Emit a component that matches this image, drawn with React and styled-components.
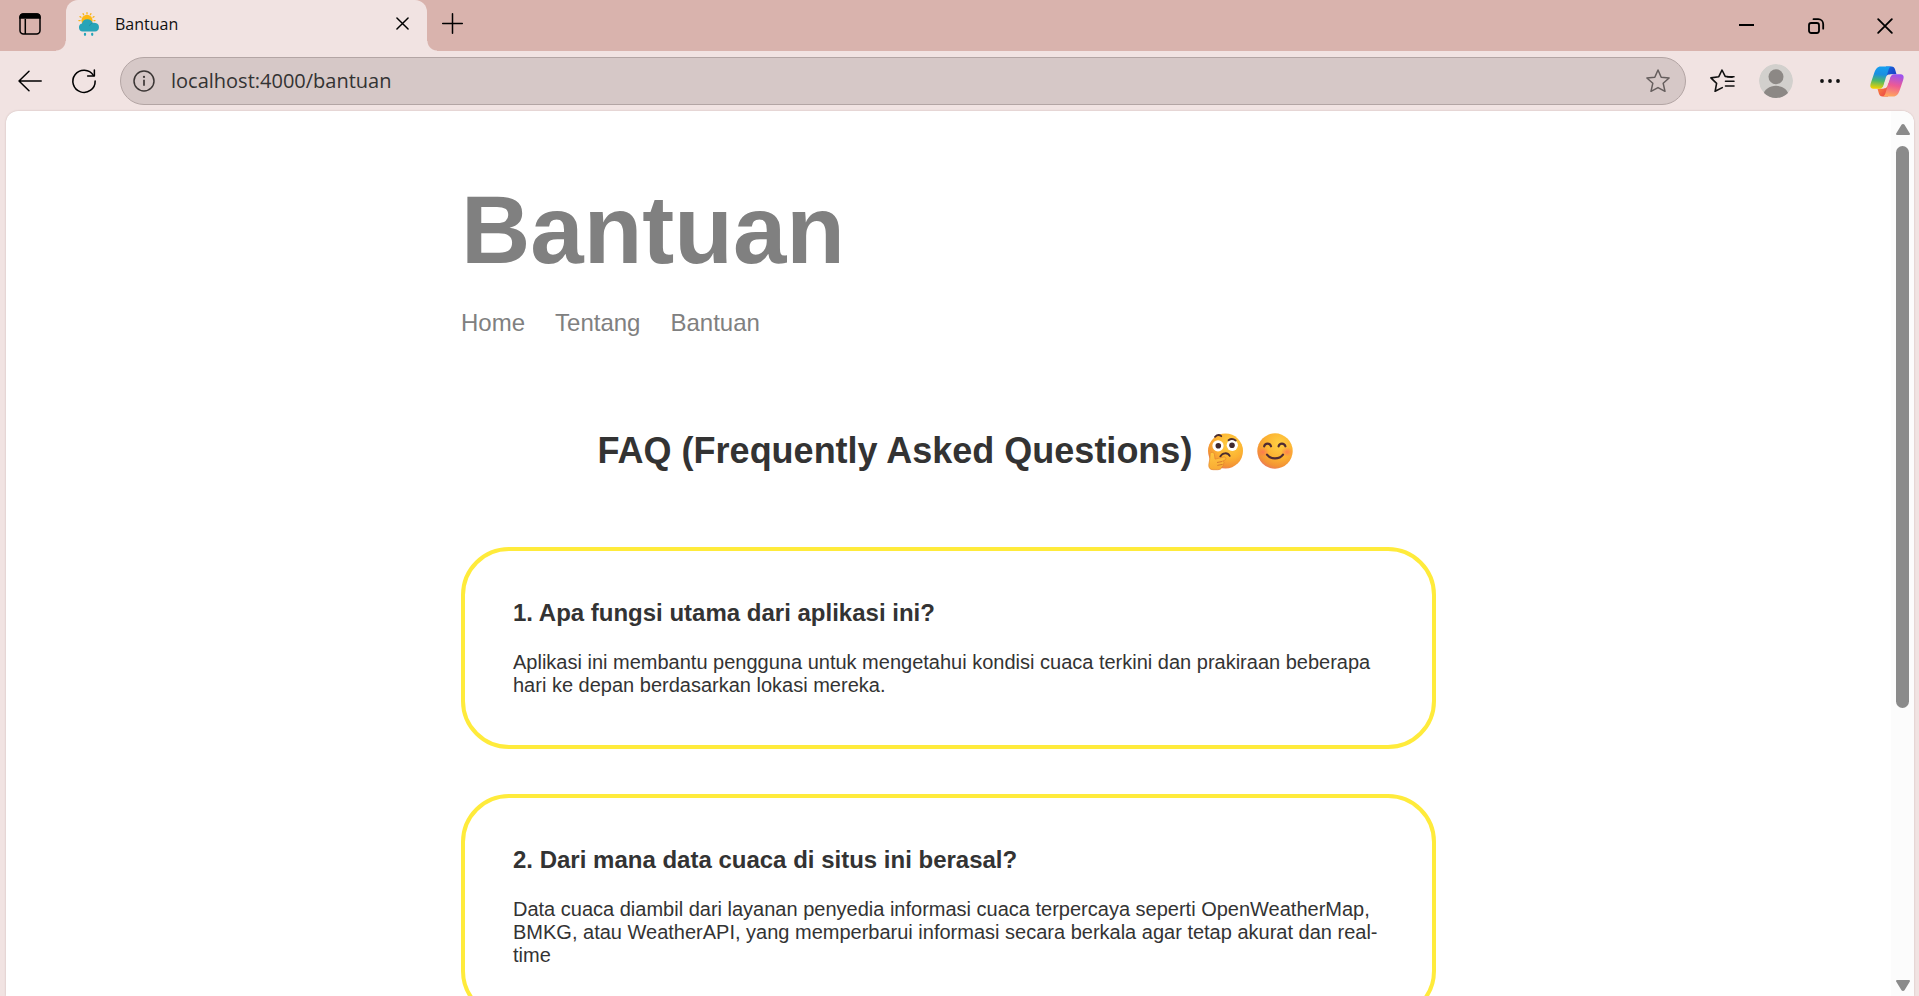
import React from "react";
import styled, { createGlobalStyle } from "styled-components";

const UI_FONT = `"Open Sans", "Noto Sans", sans-serif`;
const PAGE_FONT = `"Liberation Sans", Arial, sans-serif`;

const GlobalStyle = createGlobalStyle`
  * { box-sizing: border-box; }
  body { margin: 0; background: #f1e3e2; overflow: hidden; }
  svg { display: block; overflow: visible; flex: none; }
`;

const Window = styled.div`
  display: flex;
  flex-direction: column;
  height: 100vh;
  background: #f1e3e2;
  font-family: ${UI_FONT};
`;

const TabStrip = styled.header`
  display: flex;
  height: 51px;
  flex: none;
  background: #d9b3ad;
`;

const IconButton = styled.button`
  display: flex;
  align-items: center;
  justify-content: center;
  flex: none;
  width: ${(p) => p.$width}px;
  height: ${(p) => p.$height || 40}px;
  padding: 0;
  border: 0;
  background: none;
  color: #000;
`;

const Tab = styled.div`
  position: relative;
  display: flex;
  align-items: center;
  gap: 15px;
  width: 361px;
  height: 51px;
  margin-left: 6px;
  padding: 0 17px 4px 12px;
  border-radius: 12px 12px 0 0;
  background: #f1e3e2;

  &::before,
  &::after {
    content: "";
    position: absolute;
    bottom: 0;
    width: 10px;
    height: 10px;
  }
  &::before {
    right: 100%;
    background: radial-gradient(circle at 0 0, transparent 9px, #f1e3e2 10px);
  }
  &::after {
    left: 100%;
    background: radial-gradient(circle at 100% 0, transparent 9px, #f1e3e2 10px);
  }
`;

const TabTitle = styled.span`
  flex: 1;
  font-size: 16px;
  line-height: 24px;
  color: #111;
`;

const WindowControls = styled.div`
  display: flex;
  margin-left: auto;
`;

const Toolbar = styled.div`
  display: flex;
  align-items: center;
  height: 60px;
  flex: none;
  padding: 0 2px 0 3px;
`;

const AddressBar = styled.form`
  display: flex;
  align-items: center;
  flex: 1;
  height: 48px;
  margin: 0 9px;
  border: 1px solid #b3a5a4;
  border-radius: 24px;
  background: #d6c8c7;
`;

const AddressInput = styled.input`
  flex: 1;
  min-width: 0;
  padding: 0 0 0 4px;
  border: 0;
  outline: 0;
  background: none;
  font-family: ${UI_FONT};
  font-size: 20px;
  line-height: 28px;
  color: #333;
`;

const Viewport = styled.div`
  display: flex;
  flex: 1;
  min-height: 0;
  margin: 0 5px 0 6px;
  border-radius: 12px 12px 0 0;
  background: #fff;
  overflow: hidden;
  box-shadow: 0 0 2px #c9b4b2;
`;

const Page = styled.div`
  flex: 1;
  min-width: 0;
  overflow-y: auto;
  scrollbar-width: none;
  padding: 64px 20px;
  font-family: ${PAGE_FONT};
  color: #333;
`;

const Content = styled.div`
  max-width: 975px;
  margin: 0 auto;
`;

const Title = styled.h1`
  margin: 0 0 24px;
  font-size: 96px;
  line-height: 110px;
  font-weight: 700;
  color: #808080;
`;

const Nav = styled.nav`
  display: flex;
  gap: 30px;
  margin-bottom: 93px;
`;

const NavLink = styled.a`
  font-size: 24px;
  line-height: 28px;
  color: #808080;
  text-decoration: none;
`;

const FaqHeading = styled.h2`
  display: flex;
  align-items: center;
  justify-content: center;
  margin: 0 0 75px;
  font-size: 36px;
  line-height: 42px;
  font-weight: 700;
`;

const Emojis = styled.span`
  display: flex;
  gap: 14px;
  padding: 0 6px 0 15px;
`;

const FaqList = styled.div`
  display: flex;
  flex-direction: column;
  gap: 45px;
`;

const Card = styled.article`
  padding: 48px;
  border: 4px solid #ffeb3b;
  border-radius: 48px;
`;

const Question = styled.h3`
  margin: 0 0 24px;
  font-size: 24px;
  line-height: 28px;
  font-weight: 700;
`;

const Answer = styled.p`
  margin: 0;
  font-size: 20px;
  line-height: 23px;
`;

const ScrollTrack = styled.div`
  display: flex;
  flex-direction: column;
  align-items: center;
  flex: none;
  width: 23px;
  padding: 13px 0 5px;
  background: #fcfcfc;
`;

const ScrollRail = styled.div`
  flex: 1;
  width: 13px;
  margin: 11px 0 8px;
`;

const ScrollThumb = styled.div`
  height: 68%;
  border-radius: 7px;
  background: #8b8b8b;
`;

const TabActionsIcon = () => (
  <svg width="22" height="22" viewBox="0 0 22 22" fill="none" stroke="#000" strokeWidth="1.5">
    <rect x="1" y="1" width="20" height="20" rx="3.5" />
    <path d="M1 5V4a3 3 0 0 1 3-3h14a3 3 0 0 1 3 3v1z" fill="#000" />
    <path d="M6.3 6v15" />
  </svg>
);

const WeatherIcon = () => (
  <svg width="22" height="24" viewBox="0 0 22 24">
    <g stroke="#f9b418" strokeWidth="1.3" strokeLinecap="round">
      <path d="M9 .6v1.2M5 1.7l.6 1M13 1.7l-.6 1M2 4.6l1 .6M16 4.6l-1 .6M.9 8.6h1.2M17 8.6h-1" />
    </g>
    <circle cx="9" cy="8.4" r="5.6" fill="#fdb813" />
    <path
      d="M4.6 19.6A4.2 4.2 0 0 1 4 11.4a5.6 5.6 0 0 1 10.6-.5 4.4 4.4 0 0 1 2.9.2 4.3 4.3 0 0 1-.5 8.5z"
      fill="#27a4b8"
    />
    <path d="M14.6 10.9a4.6 4.6 0 0 0-3.3 3.2" stroke="#1d8ea2" strokeWidth=".8" fill="none" />
    <path d="M7 21.800v1M14.200 21.800v1" stroke="#27a4b8" strokeWidth="2.2" strokeLinecap="round" />
  </svg>
);

const CrossIcon = ({ size = 13 }) => (
  <svg width={size} height={size} viewBox="0 0 14 14" stroke="#000" strokeWidth="1.6" strokeLinecap="round">
    <path d="M1 1l12 12M13 1L1 13" />
  </svg>
);

const PlusIcon = () => (
  <svg width="21" height="21" viewBox="0 0 21 21" stroke="#000" strokeWidth="1.5" strokeLinecap="round">
    <path d="M10.5.7v19.6M.7 10.5h19.6" />
  </svg>
);

const MinimizeIcon = () => (
  <svg width="15" height="16" viewBox="0 0 15 16" stroke="#000" strokeWidth="2">
    <path d="M0 7h15" />
  </svg>
);

const RestoreIcon = () => (
  <svg width="16" height="16" viewBox="0 0 16 16" fill="none" stroke="#000" strokeWidth="1.8">
    <rect x="1" y="5" width="10" height="10" rx="2.2" />
    <path d="M5.500 1.200h4.700a5 5 0 0 1 5 5v4.500" strokeLinecap="round" />
  </svg>
);

const BackIcon = () => (
  <svg width="24" height="22" viewBox="0 0 24 22" fill="none" stroke="#000" strokeWidth="1.5" strokeLinecap="round">
    <path d="M23.2 11H1M11 1.2L1 11l10 9.8" strokeLinejoin="round" />
  </svg>
);

const ReloadIcon = () => (
  <svg width="24" height="24" viewBox="0 0 25 25" fill="none" stroke="#000" strokeWidth="1.6" strokeLinecap="round">
    <path d="M24.1 12.5A11.6 11.6 0 1 1 22.3 6.6" />
    <path d="M23.3 1v6.2h-7" strokeLinejoin="round" />
  </svg>
);

const InfoIcon = () => (
  <svg width="22" height="22" viewBox="0 0 22 22" fill="none" stroke="#3b3635" strokeWidth="1.5">
    <circle cx="11" cy="11" r="10" />
    <path d="M11 9.8v6" strokeWidth="1.7" />
    <circle cx="11" cy="6.9" r="1.1" fill="#3b3635" stroke="none" />
  </svg>
);

const StarIcon = () => (
  <svg width="24" height="24" viewBox="0 0 24 24" fill="none" stroke="#655e5d" strokeWidth="1.5" strokeLinejoin="round">
    <path d="M12 1l3.2 7.2 7.9.8-5.9 5.3 1.8 8L12 18.6 5 22.300l1.800-8L.9 9l7.900-.8z" />
  </svg>
);

const FavoritesIcon = () => (
  <svg
    width="24"
    height="24"
    viewBox="0 0 24 24"
    fill="none"
    stroke="#111"
    strokeWidth="1.6"
    strokeLinecap="round"
    strokeLinejoin="round"
  >
    <path d="M22 8.3l-6.800-.9L12 1 8.800 7.700.9 8.900l5.700 5.400-1.500 8 7.200-3.700" />
    <path d="M15.500 12.300H24M17.500 7.700H24M15.500 17H24" />
  </svg>
);

const AvatarIcon = () => (
  <svg width="34" height="34" viewBox="0 0 34 34">
    <defs>
      <clipPath id="avatar-clip">
        <circle cx="17" cy="17" r="17" />
      </clipPath>
    </defs>
    <g clipPath="url(#avatar-clip)">
      <circle cx="17" cy="17" r="17" fill="#d2d0cd" />
      <circle cx="17" cy="12.700" r="7.500" fill="#8c8885" />
      <path d="M4 32c1-6.500 6.500-10.200 13-10.200S29 25.500 30 32l-5 4H9z" fill="#8c8885" />
    </g>
  </svg>
);

const DotsIcon = () => (
  <svg width="20" height="4" viewBox="0 0 20 4" fill="#111">
    <circle cx="2" cy="2" r="1.900" />
    <circle cx="10" cy="2" r="1.900" />
    <circle cx="18" cy="2" r="1.900" />
  </svg>
);

const CopilotIcon = () => (
  <svg width="34" height="31" viewBox="0 0 34 31">
    <defs>
      <linearGradient id="cp-left" x1=".5" y1="0" x2=".4" y2="1">
        <stop offset="0" stopColor="#159ff0" />
        <stop offset=".35" stopColor="#1b8fe0" />
        <stop offset=".65" stopColor="#4fb868" />
        <stop offset="1" stopColor="#f3d200" />
      </linearGradient>
      <linearGradient id="cp-right" x1=".6" y1="0" x2=".4" y2="1">
        <stop offset="0" stopColor="#9b53f0" />
        <stop offset=".5" stopColor="#ee5a94" />
        <stop offset="1" stopColor="#ffa85c" />
      </linearGradient>
      <linearGradient id="cp-top" x1="0" y1="0" x2="1" y2="1">
        <stop offset="0" stopColor="#1a6ce0" />
        <stop offset="1" stopColor="#1730bd" />
      </linearGradient>
      <linearGradient id="cp-bottom" x1="0" y1="0" x2="1" y2="1">
        <stop offset="0" stopColor="#ff9c3c" />
        <stop offset="1" stopColor="#e8354a" />
      </linearGradient>
    </defs>
    <path d="M16 .5h5.500c2 0 3 1 3.600 3l1.400 4.700h-4c-3 0-4.300 1.200-5.200 4L14 16z" fill="url(#cp-top)" />
    <path d="M18 30.500h-5.500c-2 0-3-1-3.600-3L7.500 22.800h4c3 0 4.300-1.200 5.200-4L20 15z" fill="url(#cp-bottom)" />
    <path
      d="M21.500.5H10.800C7.400.5 5.600 3 4.300 6.800L1 16.500c-1.500 4.500-.5 6.300 3.500 6.300h5c2.500 0 3.700-1 4.500-3.700l4.200-14.200C18.900 2.300 19.600.9 21.500.5z"
      fill="url(#cp-left)"
    />
    <path
      d="M12.500 30.500h10.700c3.400 0 5.200-2.500 6.500-6.300L33 14.500c1.500-4.500.5-6.300-3.500-6.300h-5c-2.500 0-3.700 1-4.500 3.700l-4.200 14.200c-.7 2.600-1.400 4-3.300 4.400z"
      fill="url(#cp-right)"
    />
    <path
      d="M19 8.600h3.800c-2 .8-2.600 2-3.200 4l-2 6.800c-.6 1.900-1.700 2.900-3.900 2.900h-2.500c1.100-.5 1.900-1.500 2.500-3.600l2-6.600C16.300 9.900 17.300 8.600 19 8.600z"
      fill="#f1e3e2"
    />
  </svg>
);

const EmojiDefs = () => (
  <defs>
    <radialGradient id="face-fill" cx=".62" cy=".3" r=".75">
      <stop offset="0" stopColor="#ffd044" />
      <stop offset=".55" stopColor="#fcb232" />
      <stop offset=".85" stopColor="#f39335" />
      <stop offset="1" stopColor="#e9785f" />
    </radialGradient>
    <radialGradient id="blush">
      <stop offset="0" stopColor="#ff6a5a" stopOpacity=".7" />
      <stop offset="1" stopColor="#ff6a5a" stopOpacity="0" />
    </radialGradient>
    <linearGradient id="hand-fill" x1="0" y1="0" x2="0" y2="1">
      <stop offset="0" stopColor="#ffc740" />
      <stop offset="1" stopColor="#f9ab34" />
    </linearGradient>
  </defs>
);

const ThinkingEmoji = () => (
  <svg width="36" height="37" viewBox="0 0 36 37" role="img" aria-label="Thinking face">
    <EmojiDefs />
    <circle cx="18.500" cy="18" r="17.500" fill="url(#face-fill)" />
    <circle cx="11" cy="12.800" r="5.600" fill="#fff" />
    <circle cx="25.300" cy="12.300" r="5.600" fill="#fff" />
    <circle cx="11.300" cy="12.800" r="2.800" fill="#40292f" />
    <circle cx="25" cy="12.300" r="2.800" fill="#40292f" />
    <path
      d="M8 3.800c2-2 4.500-2.200 6.300-.6M21.500 7.200c2-1.400 5-1.400 7.200.3M13.300 23.500c2-3.800 7.200-4.600 9.400-.6"
      fill="none"
      stroke="#4a2c2f"
      strokeWidth="1.800"
      strokeLinecap="round"
    />
    <path
      d="M4.300 19.500c1.700-.6 2.900.5 3.100 2l.7 4.600 8.500-2c2.200-.5 3.200 2 1.300 3l-2.200 1c1.700.4 1.700 2.400.4 3 .7 1.200 0 2.300-1 2.600-.3 2-2 3-4.600 3H6c-3 0-4.500-2-4.200-5 .3-3 1.300-6 1.300-9.700 0-1.300.2-2.200 1.200-2.500z"
      fill="url(#hand-fill)"
      stroke="#e2842c"
      strokeWidth=".7"
    />
    <path d="M10 29.500l5.200-1M10.300 32.400l5.200-1" stroke="#d3732a" strokeWidth=".9" />
  </svg>
);

const SmilingEmoji = () => (
  <svg width="36" height="37" viewBox="0 0 36 37" role="img" aria-label="Smiling face">
    <circle cx="18" cy="18" r="17.700" fill="url(#face-fill)" />
    <ellipse cx="6" cy="19" rx="6" ry="5" fill="url(#blush)" />
    <ellipse cx="30" cy="19" rx="6" ry="5" fill="url(#blush)" />
    <path
      d="M7.200 13.300c.8-3.700 5.800-3.700 6.800 0M21.600 13.300c.8-3.700 5.800-3.700 6.800 0M10 21.700c3.500 5 12.500 5 16 0"
      fill="none"
      stroke="#4f2b34"
      strokeWidth="2.200"
      strokeLinecap="round"
    />
  </svg>
);

const ArrowIcon = ({ down }) => (
  <svg width="14" height="11" viewBox="0 0 14 11" fill="#8b8b8b" stroke="#8b8b8b" strokeWidth="2" strokeLinejoin="round">
    <path d={down ? "M1 1h12L7.800 9.600q-.8.900-1.600 0z" : "M1 10h12L7.800 1.400q-.8-.9-1.600 0z"} />
  </svg>
);

const navItems = ["Home", "Tentang", "Bantuan"];

const faqs = [
  {
    question: "1. Apa fungsi utama dari aplikasi ini?",
    answer:
      "Aplikasi ini membantu pengguna untuk mengetahui kondisi cuaca terkini dan prakiraan beberapa hari ke depan berdasarkan lokasi mereka.",
  },
  {
    question: "2. Dari mana data cuaca di situs ini berasal?",
    answer:
      "Data cuaca diambil dari layanan penyedia informasi cuaca terpercaya seperti OpenWeatherMap, BMKG, atau WeatherAPI, yang memperbarui informasi secara berkala agar tetap akurat dan real-time",
  },
];

export default function App() {
  return (
    <Window>
      <GlobalStyle />
      <TabStrip>
        <IconButton $width={60} $height={48} aria-label="Tab actions">
          <TabActionsIcon />
        </IconButton>
        <Tab>
          <WeatherIcon />
          <TabTitle>Bantuan</TabTitle>
          <IconButton $width={15} $height={24} aria-label="Close tab">
            <CrossIcon />
          </IconButton>
        </Tab>
        <IconButton $width={50} $height={47} aria-label="New tab">
          <PlusIcon />
        </IconButton>
        <WindowControls>
          <IconButton $width={69} $height={51} aria-label="Minimize">
            <MinimizeIcon />
          </IconButton>
          <IconButton $width={69} $height={51} aria-label="Restore">
            <RestoreIcon />
          </IconButton>
          <IconButton $width={69} $height={51} aria-label="Close window">
            <CrossIcon size={16} />
          </IconButton>
        </WindowControls>
      </TabStrip>
      <Toolbar>
        <IconButton $width={54} aria-label="Back">
          <BackIcon />
        </IconButton>
        <IconButton $width={54} aria-label="Reload">
          <ReloadIcon />
        </IconButton>
        <AddressBar onSubmit={(e) => e.preventDefault()}>
          <IconButton type="button" $width={46} aria-label="Site information">
            <InfoIcon />
          </IconButton>
          <AddressInput type="text" aria-label="Address" defaultValue="localhost:4000/bantuan" />
          <IconButton type="button" $width={54} aria-label="Add to favorites">
            <StarIcon />
          </IconButton>
        </AddressBar>
        <IconButton $width={54} aria-label="Favorites">
          <FavoritesIcon />
        </IconButton>
        <IconButton $width={54} aria-label="Profile">
          <AvatarIcon />
        </IconButton>
        <IconButton $width={54} aria-label="Settings and more">
          <DotsIcon />
        </IconButton>
        <IconButton $width={60} aria-label="Copilot">
          <CopilotIcon />
        </IconButton>
      </Toolbar>
      <Viewport>
        <Page>
          <Content>
            <Title>Bantuan</Title>
            <Nav>
              {navItems.map((item) => (
                <NavLink key={item} href={`#${item.toLowerCase()}`}>
                  {item}
                </NavLink>
              ))}
            </Nav>
            <FaqHeading>
              FAQ (Frequently Asked Questions)
              <Emojis>
                <ThinkingEmoji />
                <SmilingEmoji />
              </Emojis>
            </FaqHeading>
            <FaqList>
              {faqs.map((faq) => (
                <Card key={faq.question}>
                  <Question>{faq.question}</Question>
                  <Answer>{faq.answer}</Answer>
                </Card>
              ))}
            </FaqList>
          </Content>
        </Page>
        <ScrollTrack>
          <ArrowIcon />
          <ScrollRail>
            <ScrollThumb />
          </ScrollRail>
          <ArrowIcon down />
        </ScrollTrack>
      </Viewport>
    </Window>
  );
}
